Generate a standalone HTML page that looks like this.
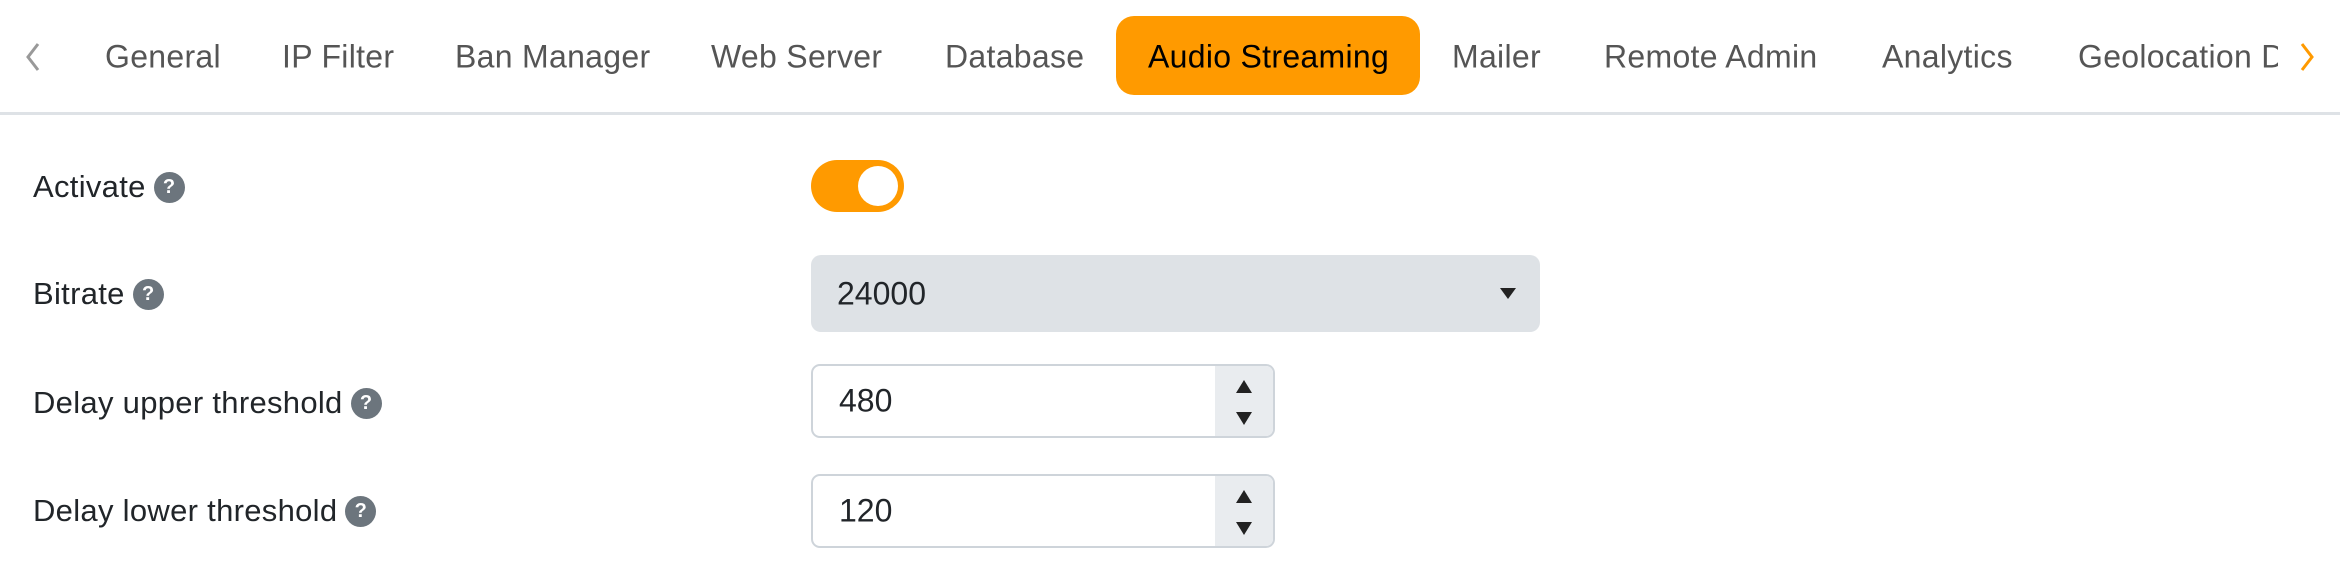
<!DOCTYPE html>
<html><head><style>
body{margin:0;width:2340px;height:562px;background:#fff;font-family:"Liberation Sans",sans-serif;position:relative;overflow:hidden;color:#212529}
.a{position:absolute}
.tab{position:absolute;top:57px;transform:translateY(-50%);font-size:32px;color:#555;white-space:nowrap;letter-spacing:0.3px}
.lab{position:absolute;left:33px;font-size:31px;transform:translateY(-50%);display:flex;align-items:center;white-space:nowrap;letter-spacing:0.3px}
.q{display:inline-block;width:31px;height:31px;border-radius:50%;background:#6c757d;color:#fff;font-size:20px;font-weight:bold;text-align:center;line-height:31px;margin-left:8px}
.inp{position:absolute;left:811px;width:464px;height:74px;border:2px solid #ced4da;border-radius:9px;box-sizing:border-box;background:#fff;overflow:hidden}
.inp span{position:absolute;left:26px;top:50%;transform:translateY(-50%);font-size:32px}
.spin{position:absolute;right:0;top:0;bottom:0;width:58px;background:#e9ecef;font-size:16px;text-align:center}
</style></head><body>
<div class="a" style="left:0;top:112px;width:2340px;height:3px;background:#dee2e6"></div>
<svg class="a" style="left:22px;top:42px" width="22" height="30"><path d="M16 2 L6 15 L16 28" fill="none" stroke="#999" stroke-width="3"/></svg>
<div class="tab" style="left:105px">General</div>
<div class="tab" style="left:282px">IP Filter</div>
<div class="tab" style="left:455px">Ban Manager</div>
<div class="tab" style="left:711px">Web Server</div>
<div class="tab" style="left:945px">Database</div>
<div class="a" style="left:1116px;top:16px;width:304px;height:79px;background:#ff9a00;border-radius:18px"></div>
<div class="tab" style="left:1148px;color:#000">Audio Streaming</div>
<div class="tab" style="left:1452px">Mailer</div>
<div class="tab" style="left:1604px">Remote Admin</div>
<div class="tab" style="left:1882px">Analytics</div>
<div class="a" style="left:2078px;top:0;width:200px;height:110px;overflow:hidden"><div class="tab" style="left:0">Geolocation Database</div></div>
<svg class="a" style="left:2296px;top:42px" width="22" height="30"><path d="M6 2 L16 15 L6 28" fill="none" stroke="#ff9a00" stroke-width="3"/></svg>

<div class="lab" style="top:187px">Activate<span class="q">?</span></div>
<div class="a" style="left:811px;top:160px;width:93px;height:52px;border-radius:26px;background:#ff9a00"></div>
<div class="a" style="left:858px;top:166px;width:40px;height:40px;border-radius:50%;background:#fff"></div>

<div class="lab" style="top:294px">Bitrate<span class="q">?</span></div>
<div class="a" style="left:811px;top:255px;width:729px;height:77px;background:#dee2e6;border-radius:10px"><span class="a" style="left:26px;top:50%;transform:translateY(-50%);font-size:32px">24000</span><svg class="a" style="right:24px;top:33px" width="16" height="12"><path d="M0 0H16L8 11Z" fill="#222"/></svg></div>

<div class="lab" style="top:403px">Delay upper threshold<span class="q">?</span></div>
<div class="inp" style="top:364px"><span>480</span><div class="spin"><svg class="a" style="left:21px;top:14px" width="16" height="14"><path d="M8 0L16 13H0Z" fill="#222"/></svg><svg class="a" style="left:21px;top:46px" width="16" height="14"><path d="M0 0H16L8 13Z" fill="#222"/></svg></div></div>

<div class="lab" style="top:511px">Delay lower threshold<span class="q">?</span></div>
<div class="inp" style="top:474px"><span>120</span><div class="spin"><svg class="a" style="left:21px;top:14px" width="16" height="14"><path d="M8 0L16 13H0Z" fill="#222"/></svg><svg class="a" style="left:21px;top:46px" width="16" height="14"><path d="M0 0H16L8 13Z" fill="#222"/></svg></div></div>
</body></html>
